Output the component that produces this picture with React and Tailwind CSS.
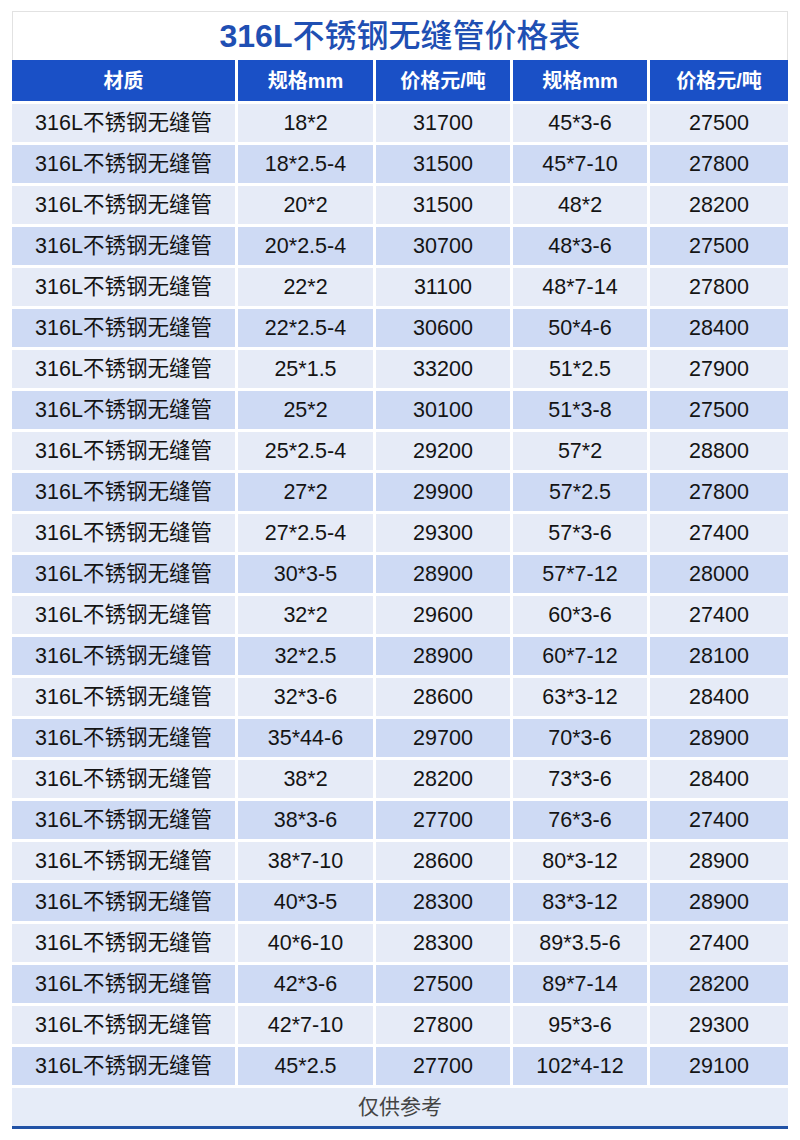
import React from "react";

const rows = [
  ["18*2", "31700", "45*3-6", "27500"],
  ["18*2.5-4", "31500", "45*7-10", "27800"],
  ["20*2", "31500", "48*2", "28200"],
  ["20*2.5-4", "30700", "48*3-6", "27500"],
  ["22*2", "31100", "48*7-14", "27800"],
  ["22*2.5-4", "30600", "50*4-6", "28400"],
  ["25*1.5", "33200", "51*2.5", "27900"],
  ["25*2", "30100", "51*3-8", "27500"],
  ["25*2.5-4", "29200", "57*2", "28800"],
  ["27*2", "29900", "57*2.5", "27800"],
  ["27*2.5-4", "29300", "57*3-6", "27400"],
  ["30*3-5", "28900", "57*7-12", "28000"],
  ["32*2", "29600", "60*3-6", "27400"],
  ["32*2.5", "28900", "60*7-12", "28100"],
  ["32*3-6", "28600", "63*3-12", "28400"],
  ["35*44-6", "29700", "70*3-6", "28900"],
  ["38*2", "28200", "73*3-6", "28400"],
  ["38*3-6", "27700", "76*3-6", "27400"],
  ["38*7-10", "28600", "80*3-12", "28900"],
  ["40*3-5", "28300", "83*3-12", "28900"],
  ["40*6-10", "28300", "89*3.5-6", "27400"],
  ["42*3-6", "27500", "89*7-14", "28200"],
  ["42*7-10", "27800", "95*3-6", "29300"],
  ["45*2.5", "27700", "102*4-12", "29100"],
];

const font = { fontFamily: '"Liberation Sans", "Noto Sans CJK SC", sans-serif' };

export default function App() {
  return (
    <div className="bg-white w-[800px] h-[1140px] pt-[11px] px-[12px]" style={font}>
      <div className="border border-b-0 border-[#e2e2e2] h-[49px] flex items-center justify-center">
        <span className="text-[32px] leading-none text-[#1f4fb3]">
          <span className="font-bold">316L</span>
          <span className="font-medium">不锈钢无缝管价格表</span>
        </span>
      </div>
      <div className="grid grid-cols-[223px_135px_134px_134px_138px] gap-x-[3px]">
        {["材质", "规格mm", "价格元/吨", "规格mm", "价格元/吨"].map((h, i) => (
          <div
            key={i}
            className="h-[41px] bg-[#1a50c6] text-white text-[20px] font-bold flex items-center justify-center"
          >
            {h}
          </div>
        ))}
      </div>
      <div className="flex flex-col gap-y-[3px] mt-[3px]">
        {rows.map((r, idx) => (
          <div key={idx} className="grid grid-cols-[223px_135px_134px_134px_138px] gap-x-[3px]">
            {["316L不锈钢无缝管", ...r].map((c, j) => (
              <div
                key={j}
                className={`h-[38px] flex items-center justify-center text-[21.5px] text-[#141414] ${
                  idx % 2 === 0 ? "bg-[#e6ebf7]" : "bg-[#cedaf4]"
                }`}
              >
                {c}
              </div>
            ))}
          </div>
        ))}
        <div className="h-[38px] bg-[#e6ecf8] flex items-center justify-center text-[21px] text-[#444]">
          仅供参考
        </div>
      </div>
      <div className="h-[3px] bg-[#2152a6]"></div>
    </div>
  );
}
